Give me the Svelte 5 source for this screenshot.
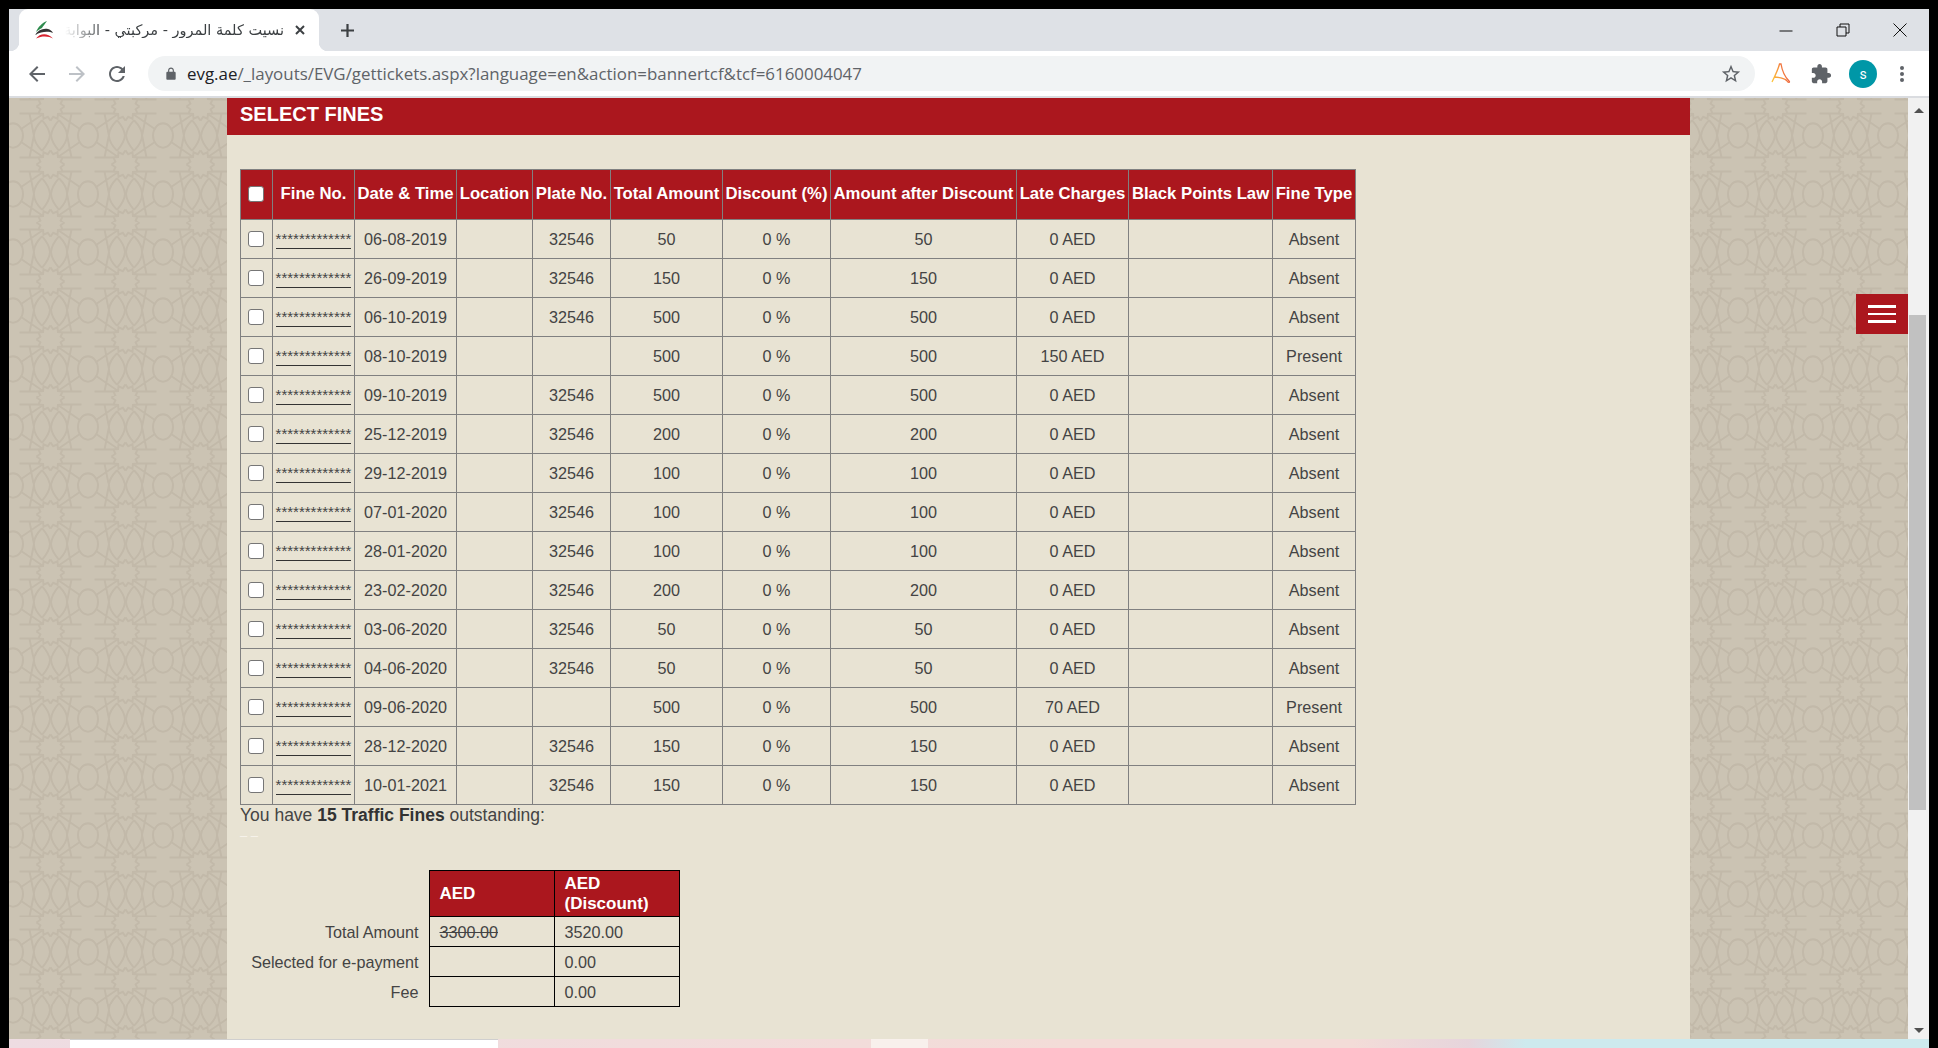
<script>
  const fines = [
    ['06-08-2019', '32546', 50, '0 AED', 'Absent'],
    ['26-09-2019', '32546', 150, '0 AED', 'Absent'],
    ['06-10-2019', '32546', 500, '0 AED', 'Absent'],
    ['08-10-2019', '', 500, '150 AED', 'Present'],
    ['09-10-2019', '32546', 500, '0 AED', 'Absent'],
    ['25-12-2019', '32546', 200, '0 AED', 'Absent'],
    ['29-12-2019', '32546', 100, '0 AED', 'Absent'],
    ['07-01-2020', '32546', 100, '0 AED', 'Absent'],
    ['28-01-2020', '32546', 100, '0 AED', 'Absent'],
    ['23-02-2020', '32546', 200, '0 AED', 'Absent'],
    ['03-06-2020', '32546', 50, '0 AED', 'Absent'],
    ['04-06-2020', '32546', 50, '0 AED', 'Absent'],
    ['09-06-2020', '', 500, '70 AED', 'Present'],
    ['28-12-2020', '32546', 150, '0 AED', 'Absent'],
    ['10-01-2021', '32546', 150, '0 AED', 'Absent']
  ];
  const headers = ['Fine No.', 'Date & Time', 'Location', 'Plate No.', 'Total Amount', 'Discount (%)', 'Amount after Discount', 'Late Charges', 'Black Points Law', 'Fine Type'];
  const widths = [32, 82, 102, 76, 78, 112, 108, 186, 112, 144, 83];
</script>

<div class="frame">
  <div class="tabstrip">
    <div class="tab">
      <svg class="favicon" width="20" height="20" viewBox="0 0 20 20">
        <path d="M2 12 C4 7 8 3 13 1 C11 4 9 6 8 8 C6 9 4 10 2 12z" fill="#2e8b4e" />
        <path d="M1 15 C4 10 9 8 14 9 C16 9.500 18 11 19 13 C15 11 8 11 1 15z" fill="#333" />
        <path d="M2 18.500 C6 13.500 13 12.500 19 18.500 C15 16 8 15.500 2 18.500z" fill="#d8232f" />
      </svg>
      <span class="tab-title" dir="rtl">نسيت كلمة المرور - مركبتي - البوابة</span>
      <svg class="tab-close" width="12" height="12" viewBox="0 0 12 12">
        <path d="M2 2 L10 10 M10 2 L2 10" stroke="#3c4043" stroke-width="2" fill="none" />
      </svg>
    </div>
    <svg class="newtab" width="17" height="17" viewBox="0 0 17 17">
      <path d="M8.500 2 V15 M2 8.500 H15" stroke="#3c4043" stroke-width="2.200" fill="none" />
    </svg>
    <div class="winctl">
      <svg width="14" height="14" viewBox="0 0 14 14"><path d="M0.500 8 H13.500" stroke="#111" fill="none" /></svg>
      <svg width="14" height="14" viewBox="0 0 14 14"><path d="M1 4 H10 V13 H1z M4 4 V1 H13 V10 H10" stroke="#111" fill="none" /></svg>
      <svg width="14" height="14" viewBox="0 0 14 14"><path d="M0.500 0.500 L13.500 13.500 M13.500 0.500 L0.500 13.500" stroke="#111" fill="none" /></svg>
    </div>
  </div>

  <div class="toolbar">
    <svg class="nav" width="24" height="24" viewBox="0 0 24 24"><path fill="#5f6368" d="M20 11H7.830l5.590-5.590L12 4l-8 8 8 8 1.410-1.410L7.830 13H20v-2z" /></svg>
    <svg class="nav" width="24" height="24" viewBox="0 0 24 24"><path fill="#bdc1c6" d="M4 11h12.170l-5.590-5.590L12 4l8 8-8 8-1.410-1.410L16.170 13H4v-2z" /></svg>
    <svg class="nav" width="24" height="24" viewBox="0 0 24 24"><path fill="#5f6368" d="M17.650 6.350C16.200 4.900 14.210 4 12 4c-4.420 0-7.990 3.580-7.990 8s3.570 8 7.990 8c3.730 0 6.840-2.550 7.730-6h-2.080c-.82 2.330-3.040 4-5.650 4-3.310 0-6-2.690-6-6s2.690-6 6-6c1.660 0 3.140.69 4.220 1.780L13 11h7V4l-2.350 2.350z" /></svg>
    <div class="omnibox">
      <svg width="14" height="14" viewBox="0 0 24 24"><path fill="#5f6368" d="M18 8h-1V6c0-2.760-2.240-5-5-5S7 3.240 7 6v2H6c-1.100 0-2 .9-2 2v10c0 1.100.9 2 2 2h12c1.100 0 2-.9 2-2V10c0-1.100-.9-2-2-2zM9 6c0-1.660 1.340-3 3-3s3 1.340 3 3v2H9V6z" /></svg>
      <span class="url"><b>evg.ae</b>/_layouts/EVG/gettickets.aspx?language=en&amp;action=bannertcf&amp;tcf=6160004047</span>
      <svg class="star" width="22" height="22" viewBox="0 0 24 24"><path fill="#5f6368" d="M22 9.240l-7.190-.62L12 2 9.190 8.630 2 9.240l5.460 4.730L5.820 21 12 17.270 18.180 21l-1.630-7.030L22 9.240zM12 15.400l-3.760 2.270 1-4.280-3.320-2.880 4.380-.38L12 6.100l1.710 4.040 4.380.38-3.320 2.880 1 4.280L12 15.400z" /></svg>
    </div>
    <div class="exts">
      <svg width="22" height="24" viewBox="0 0 22 24">
        <defs><linearGradient id="acro" x1="0" y1="1" x2="1" y2="0.600"><stop offset="0" stop-color="#fdc73a" /><stop offset="0.600" stop-color="#f7913c" /><stop offset="1" stop-color="#e9503f" /></linearGradient></defs>
        <path d="M2 20 C5 14 8 8 9.500 2 H11 C12 8 15 15 19 19 C20.500 20.500 18 21 17 19 C15 16 7 15 4 15" stroke="url(#acro)" stroke-width="1.300" fill="none" />
      </svg>
      <svg class="puzzle" width="22" height="22" viewBox="0 0 24 24"><path fill="#5f6368" d="M20.500 11H19V7c0-1.100-.9-2-2-2h-4V3.500C13 2.120 11.880 1 10.500 1S8 2.120 8 3.500V5H4c-1.100 0-1.990.9-1.990 2v3.800H3.500c1.490 0 2.700 1.210 2.700 2.700s-1.210 2.700-2.700 2.700H2V20c0 1.100.9 2 2 2h3.800v-1.500c0-1.490 1.210-2.700 2.700-2.700 1.490 0 2.700 1.210 2.700 2.700V22H17c1.100 0 2-.9 2-2v-4h1.500c1.380 0 2.500-1.120 2.500-2.500S21.880 11 20.500 11z" /></svg>
      <span class="avatar">s</span>
      <svg width="6" height="18" viewBox="0 0 6 18"><circle cx="3" cy="3" r="2" fill="#5f6368" /><circle cx="3" cy="9" r="2" fill="#5f6368" /><circle cx="3" cy="15" r="2" fill="#5f6368" /></svg>
    </div>
  </div>

  <div class="viewport">
    <div class="page">
      <main class="panel">
        <h2 class="panel-title">SELECT FINES</h2>
        <table class="fines">
          <colgroup>
            {#each widths as w}<col style="width:{w}px" />{/each}
          </colgroup>
          <thead>
            <tr>
              <th><input type="checkbox" /></th>
              {#each headers as h}<th>{h}</th>{/each}
            </tr>
          </thead>
          <tbody>
            {#each fines as f}
              <tr>
                <td><input type="checkbox" /></td>
                <td><span class="fine-no">*************</span></td>
                <td>{f[0]}</td>
                <td></td>
                <td>{f[1]}</td>
                <td>{f[2]}</td>
                <td>0 %</td>
                <td>{f[2]}</td>
                <td>{f[3]}</td>
                <td></td>
                <td>{f[4]}</td>
              </tr>
            {/each}
          </tbody>
        </table>
        <p class="summary">You have <b>15 Traffic Fines</b> outstanding:</p>
        <p class="dashes">– –</p>
        <table class="totals">
          <colgroup><col class="c-label" /><col class="c-val" /><col class="c-val" /></colgroup>
          <thead>
            <tr><td class="label"></td><th>AED</th><th>AED<br />(Discount)</th></tr>
          </thead>
          <tbody>
            <tr><td class="label">Total Amount</td><td><s>3300.00</s></td><td>3520.00</td></tr>
            <tr><td class="label">Selected for e-payment</td><td></td><td>0.00</td></tr>
            <tr><td class="label">Fee</td><td></td><td>0.00</td></tr>
          </tbody>
        </table>
      </main>
      <button class="hamburger" aria-label="Menu"><i></i><i></i><i></i></button>
    </div>
    <div class="scrollbar">
      <span class="arrow up"></span>
      <div class="track"><div class="thumb"></div></div>
      <span class="arrow down"></span>
    </div>
  </div>

  <div class="taskbar">
    <div class="tb-white"></div>
    <div class="tb-box"></div>
    <div class="tb-clock">9:00 PM</div>
  </div>
</div>

<style>
  :global(body) {
    margin: 0;
    background: #000;
  }

  .frame {
    width: 1938px;
    height: 1048px;
    box-sizing: border-box;
    padding: 9px 9px 0 9px;
    display: flex;
    flex-direction: column;
    overflow: hidden;
    background: #000;
    font-family: "Liberation Sans", Arial, sans-serif;
  }

  /* Browser chrome */
  .tabstrip {
    height: 42px;
    flex: none;
    display: flex;
    align-items: center;
    background: #dee1e6;
    padding-left: 10px;
  }

  .tab {
    position: relative;
    width: 300px;
    height: 42px;
    box-sizing: border-box;
    display: flex;
    align-items: center;
    background: #fff;
    border-radius: 9px 9px 0 0;
    padding: 0 14px 0 15px;
  }
  .tab::before,
  .tab::after {
    content: "";
    position: absolute;
    bottom: 0;
    width: 9px;
    height: 9px;
  }
  .tab::before {
    left: -9px;
    background: radial-gradient(circle at 0 0, transparent 9px, #fff 9.500px);
  }
  .tab::after {
    right: -9px;
    background: radial-gradient(circle at 100% 0, transparent 9px, #fff 9.500px);
  }

  .favicon { flex: none; margin-right: 11px; }

  .tab-title {
    width: 219px;
    flex: none;
    overflow: hidden;
    white-space: nowrap;
    font-family: "DejaVu Sans", "Noto Sans", sans-serif;
    font-size: 14.500px;
    color: #3c4043;
    -webkit-mask-image: linear-gradient(to right, transparent, #000 40px);
    mask-image: linear-gradient(to right, transparent, #000 40px);
  }

  .tab-close { margin-left: 10px; flex: none; }
  .newtab { margin-left: 20px; flex: none; }

  .winctl {
    margin-left: auto;
    display: flex;
    gap: 43px;
    padding-right: 22px;
    align-items: center;
  }

  .toolbar {
    height: 45px;
    flex: none;
    box-sizing: border-box;
    display: flex;
    align-items: center;
    background: #fff;
    padding-left: 16px;
    gap: 16px;
  }

  .nav { flex: none; }

  .omnibox {
    width: 1607px;
    height: 35px;
    margin-left: 3px;
    flex: none;
    box-sizing: border-box;
    display: flex;
    align-items: center;
    gap: 9px;
    padding: 0 13px 0 16px;
    background: #f1f3f4;
    border-radius: 18px;
  }

  .url {
    font-family: "Open Sans", "Noto Sans", sans-serif;
    font-size: 16.900px;
    color: #5f6368;
    white-space: nowrap;
  }
  .url b {
    font-weight: 400;
    color: #202124;
  }

  .star { margin-left: auto; }

  .exts {
    display: flex;
    align-items: center;
    gap: 17px;
    margin-left: -1px;
  }
  .puzzle { margin-left: 1px; }

  .avatar {
    width: 28px;
    height: 28px;
    border-radius: 50%;
    background: #0097a7;
    color: #fff;
    font-family: Roboto, sans-serif;
    font-size: 14px;
    display: flex;
    align-items: center;
    justify-content: center;
    margin-right: 5px;
  }

  /* Page */
  .viewport {
    flex: none;
    height: 941px;
    display: flex;
    border-top: 2px solid #dadce0;
    overflow: hidden;
  }

  .page {
    position: relative;
    flex: 1;
    padding: 0 218px;
    background-color: #cbc3b3;
    background-image: url("data:image/svg+xml,%3Csvg xmlns='http://www.w3.org/2000/svg' width='75' height='58.33' viewBox='0 0 75 58.33'%3E%3Cdefs%3E%3Cg id='q' fill='none' stroke='%23c2b9a9' stroke-width='2'%3E%3Cpath d='M14 0L10.100 2.700L12.100 7L7.400 7.400L7 12.100L2.700 10.100L0 14M12.100 7H31M8.500 13.500Q17 22 16.500 29.170M8.500 13.500Q1 22 .5 29.170M21 7L16.500 29.170M7.400 7.400L29 22'/%3E%3Cellipse cx='37.500' cy='29.170' rx='10' ry='12.500'/%3E%3C/g%3E%3C/defs%3E%3Cg transform='translate(37.500 29.170)'%3E%3Cuse href='%23q'/%3E%3Cuse href='%23q' transform='scale(-1 1)'/%3E%3Cuse href='%23q' transform='scale(1 -1)'/%3E%3Cuse href='%23q' transform='scale(-1 -1)'/%3E%3C/g%3E%3C/svg%3E");
    background-position: 4px 37.500px;
  }

  .panel {
    height: 100%;
    background: #e8e3d3;
    color: #444;
    font-size: 16.200px;
    box-sizing: border-box;
    overflow: hidden;
  }

  .panel-title {
    margin: 0;
    height: 37px;
    box-sizing: border-box;
    padding: 4px 13px 0;
    background: #ab171e;
    color: #fff;
    font-size: 20px;
    line-height: 24px;
    font-weight: 700;
  }

  .fines {
    margin: 34px 0 0 13px;
    width: 1115px;
    table-layout: fixed;
    border-collapse: collapse;
  }
  .fines th,
  .fines td {
    border: 1px solid #808080;
    padding: 1px 0 0 0;
    text-align: center;
    white-space: nowrap;
  }
  .fines th {
    height: 50px;
    padding: 0 0 1px 0;
    background: #ab171e;
    color: #fff;
    font-weight: 700;
    font-size: 16.700px;
    box-sizing: border-box;
  }
  .fines td {
    height: 39px;
    box-sizing: border-box;
    color: #444;
  }

  .fine-no {
    display: inline-block;
    font-size: 15px;
    line-height: 14px;
    height: 16px;
    border-bottom: 1px solid #333;
    position: relative;
    top: -1px;
  }

  input[type="checkbox"] {
    appearance: none;
    -webkit-appearance: none;
    display: block;
    width: 16px;
    height: 16px;
    margin: -1px auto 0;
    box-sizing: border-box;
    background: #fff;
    border: 1.500px solid #767676;
    border-radius: 3px;
    position: relative;
    left: -1px;
  }

  .summary {
    margin: 0 0 0 13px;
    height: 20px;
    line-height: 20px;
    font-size: 17.500px;
    color: #444;
  }
  .summary b { color: #333; }

  .dashes {
    margin: 0 0 0 13px;
    height: 45px;
    font-size: 13px;
    line-height: 22px;
    color: #f7f4ec;
  }

  .totals {
    margin-left: 13px;
    width: 439px;
    table-layout: fixed;
    border-collapse: collapse;
    font-size: 16.200px;
  }
  .c-label { width: 189px; }
  .c-val { width: 125px; }
  .totals th,
  .totals td {
    border: 1px solid #000;
    padding: 0 0 0 10px;
    text-align: left;
    height: 29px;
    line-height: 20px;
    color: #444;
  }
  .totals th {
    height: 46px;
    padding-top: 1px;
    padding-bottom: 1px;
    box-sizing: border-box;
    background: #ab171e;
    color: #fff;
    font-size: 17px;
    font-weight: 700;
  }
  .totals td.label {
    border: none;
    border-right: 1px solid #000;
    padding: 0 10px 0 0;
    text-align: right;
  }

  .hamburger {
    position: absolute;
    right: 0;
    top: 196px;
    width: 52px;
    height: 40px;
    padding: 0;
    border: none;
    background: #ab171e;
    display: flex;
    flex-direction: column;
    align-items: center;
    justify-content: center;
    gap: 5px;
  }
  .hamburger i {
    display: block;
    width: 28px;
    height: 2.500px;
    background: #fff;
  }

  /* Scrollbar */
  .scrollbar {
    flex: none;
    width: 21px;
    background: #f1f1f1;
    display: flex;
    flex-direction: column;
    align-items: center;
    position: relative;
  }
  .arrow {
    position: absolute;
    left: 6px;
    width: 0;
    height: 0;
    border-left: 5px solid transparent;
    border-right: 5px solid transparent;
  }
  .arrow.up { top: 10px; border-bottom: 5px solid #505050; }
  .arrow.down { bottom: 6px; border-top: 5px solid #505050; }
  .track { flex: 1; width: 17px; padding-top: 217px; padding-bottom: 229px; box-sizing: border-box; margin-right: 2px; }
  .thumb { height: 100%; background: #c1c1c1; }

  /* Bottom peek of the desktop behind the window */
  .taskbar {
    flex: none;
    height: 9px;
    display: flex;
    overflow: hidden;
    background: linear-gradient(to right, #eedce2 0, #f3dcd8 55%, #f3dcd8 70%, #e6d5dc 76%, #cdeaee 79%, #cdeaee 100%);
  }
  .tb-white {
    width: 428px;
    margin-left: 61px;
    background: #fff;
    border-top: 1px solid #cfcfcf;
  }
  .tb-box {
    width: 57px;
    margin-left: 373px;
    background: #f8f0ec;
  }
  .tb-clock {
    margin-left: 867px;
    padding-top: 7px;
    font-size: 14px;
    line-height: 16px;
    color: #111;
    white-space: nowrap;
  }
</style>
